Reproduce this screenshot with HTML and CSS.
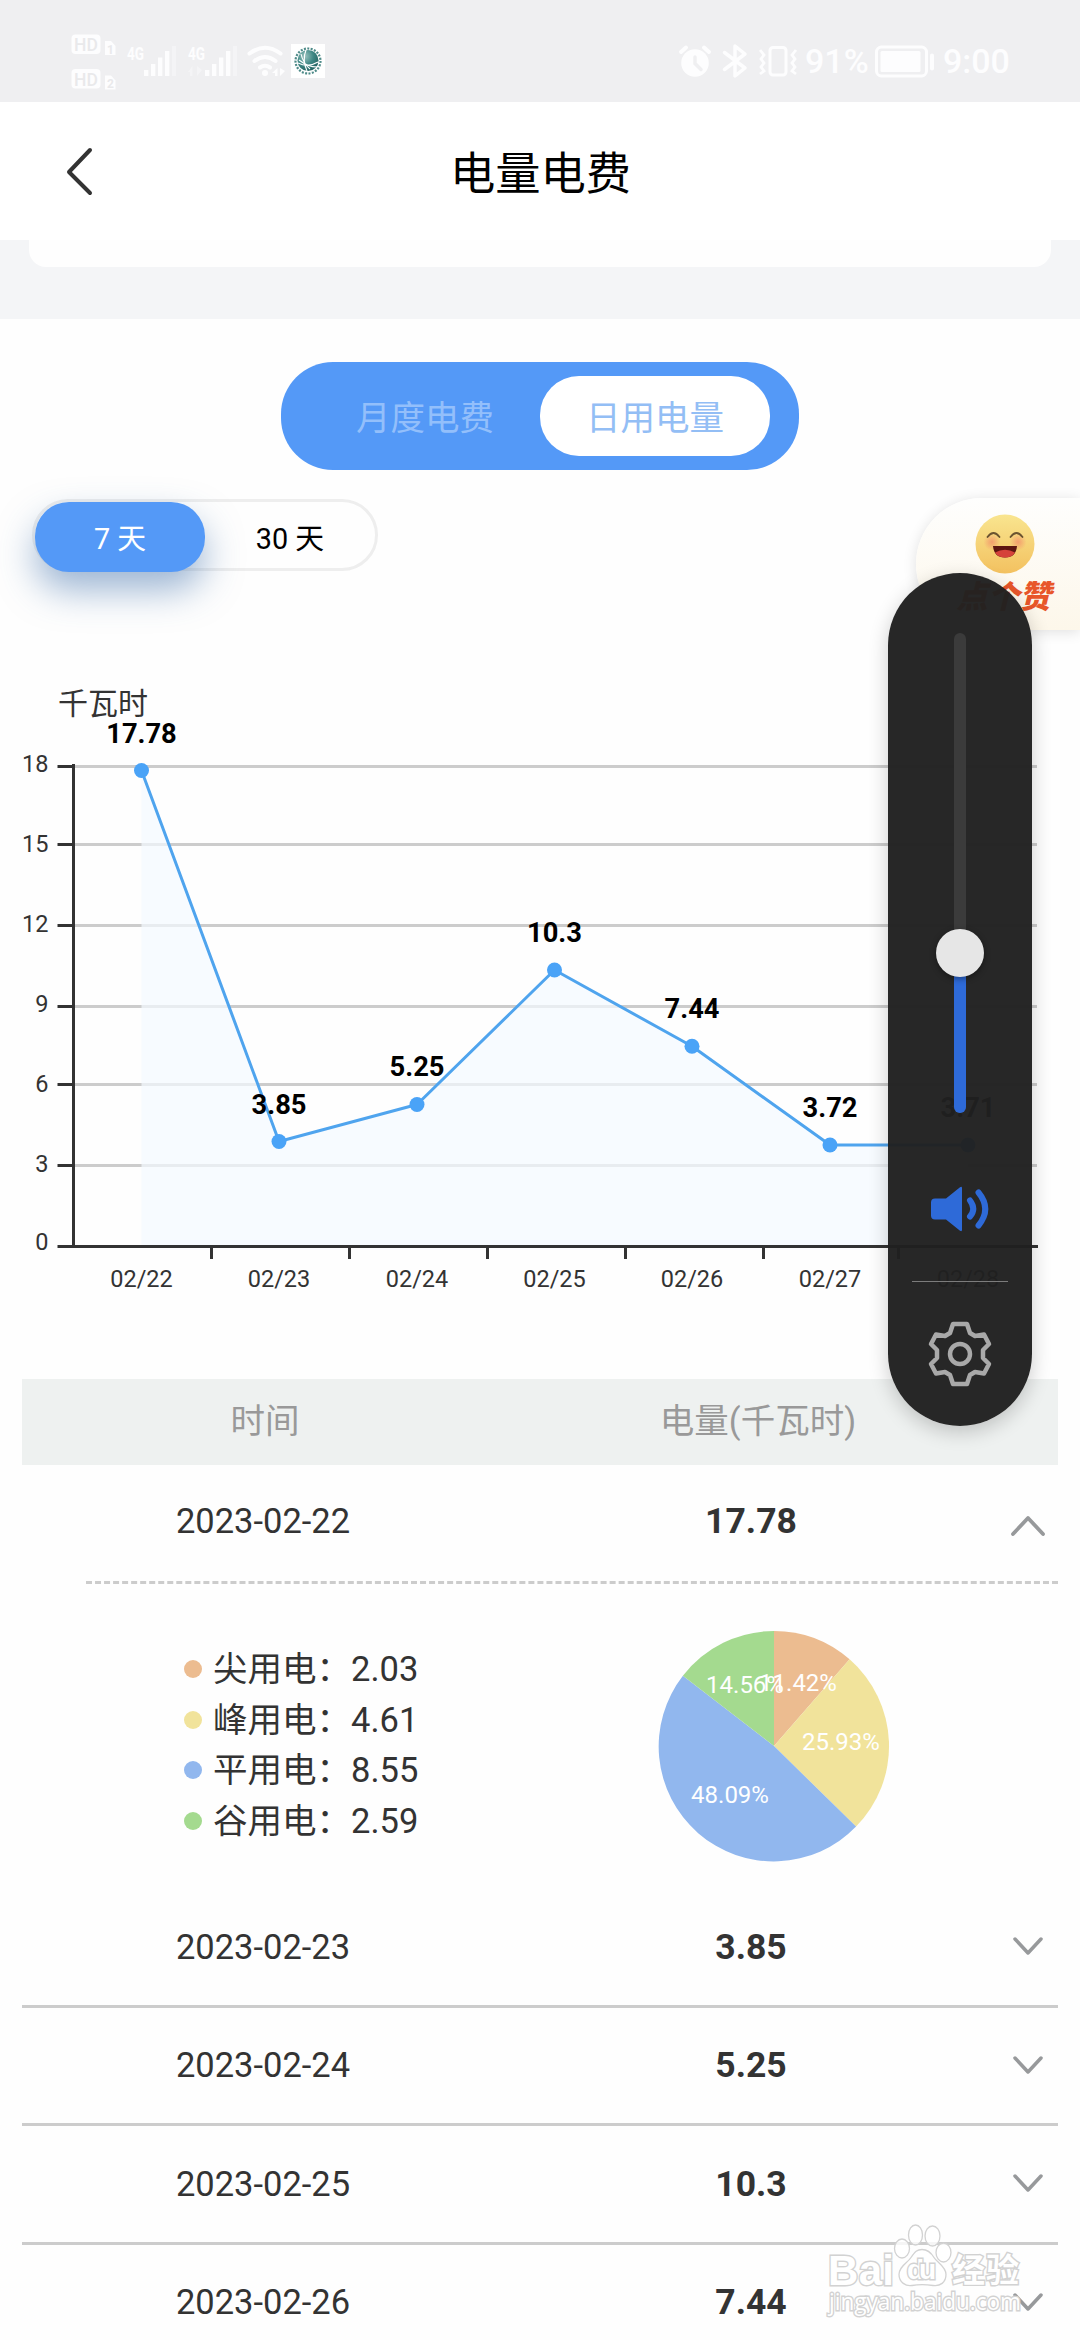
FILE: index.html
```html
<!DOCTYPE html>
<html lang="zh-CN">
<head>
<meta charset="utf-8">
<title>电量电费</title>
<link rel="stylesheet" href="styles.css">
</head>
<body>
<div class="screen">
  <header class="status">
    <svg class="status-left" width="256" height="56" viewBox="70 33 256 56" fill="#fdfdfe">
      <rect x="71.500" y="34.500" width="29" height="19.500" rx="4"/>
      <text class="st-hd" x="74" y="51">HD</text>
      <path d="M105 41h6l4.500 5v9h-10.500z"/>
      <text class="st-sim" x="107" y="53.500">1</text>
      <rect x="71.500" y="69" width="29" height="19.500" rx="4"/>
      <text class="st-hd" x="74" y="85.500">HD</text>
      <path d="M105 75.500h6l4.500 5v9h-10.500z"/>
      <text class="st-sim" x="107" y="88">2</text>
      <text class="st-net" x="127" y="60" textLength="17" lengthAdjust="spacingAndGlyphs">4G</text>
      <path d="M144 70h4.300v6H144zM151 64h4.300v12H151zM158 57.500h4.300V76H158zM165 51h4.300v25H165z"/>
      <rect x="172" y="46" width="4" height="30" opacity=".4"/>
      <text class="st-net" x="188" y="60" textLength="17" lengthAdjust="spacingAndGlyphs">4G</text>
      <path d="M192.500 66v10h-2.500v-4h-2zM197 66v10l5-6z" opacity=".4"/>
      <path d="M205 70h4.300v6H205zM212 64h4.300v12H212zM219 57.500h4.300V76H219zM226 51h4.300v25H226z"/>
      <rect x="233" y="46" width="4" height="30" opacity=".4"/>
      <g fill="none" stroke="#fdfdfe" stroke-width="4" stroke-linecap="round">
        <path d="M249.500 53.500q15.500-11.500 31 0M254.500 61q10.500-8 21 0M260 67.500q5-3.500 10 0"/>
      </g>
      <circle cx="265" cy="73" r="3"/>
      <path d="M277.500 68v8H275v-3h-3zM280 68v8l5-5z"/>
      <rect x="291" y="44" width="34" height="34" fill="#fff"/>
      <circle cx="308" cy="61" r="12.500" fill="none" stroke="#4d8a88" stroke-width="2.200" stroke-dasharray="2 1.400"/>
      <circle cx="308" cy="60.500" r="10.500" fill="url(#globe)"/>
      <path d="M306 50q-4 10 1 21M301 54q2 9 9 15M298 63q10 5 20-1M299 60q9 7 18 7" fill="none" stroke="#fff" stroke-width="1.100"/>
      <defs>
        <radialGradient id="globe" cx=".35" cy=".3" r=".8">
          <stop offset="0" stop-color="#9cc4c0"/>
          <stop offset=".5" stop-color="#3f8885"/>
          <stop offset="1" stop-color="#1f5c5b"/>
        </radialGradient>
      </defs>
    </svg>
    <div class="status-right">
      <svg width="34" height="34" viewBox="0 0 34 34"><circle cx="17" cy="19" r="13.800" fill="#fdfdfe"/><path d="M3 8l5-4.500M31 8l-5-4.500" stroke="#fdfdfe" stroke-width="4" stroke-linecap="round"/><path d="M17 13v6.500l6 6" fill="none" stroke="#efeff1" stroke-width="3.500" stroke-linecap="round"/></svg>
      <svg class="bt" width="26" height="34" viewBox="0 0 26 34"><path d="M2.500 8.500L23 24l-10 8V2l10 8L2.500 25.500" fill="none" stroke="#fdfdfe" stroke-width="3.500" stroke-linejoin="round" stroke-linecap="round"/></svg>
      <svg class="vib" width="40" height="34" viewBox="0 0 40 34" fill="none" stroke="#fdfdfe"><rect x="12" y="3.500" width="16" height="27.500" rx="3" stroke-width="3"/><path d="M2 6l4 5-3 4 3 4-3 4 3 4-4 3M38 6l-4 5 3 4-3 4 3 4-3 4 4 3" stroke-width="2.800"/></svg>
      <span class="pct">91%</span>
      <svg class="bat" width="62" height="34" viewBox="0 0 62 34"><rect x="1.500" y="3" width="50" height="29" rx="5" fill="none" stroke="#fdfdfe" stroke-width="3"/><rect x="5.500" y="7" width="40" height="21" rx="1.500" fill="#fdfdfe"/><rect x="55" y="9.500" width="4" height="17" rx="2" fill="#fdfdfe"/></svg>
      <span class="clock">9:00</span>
    </div>
  </header>

  <nav class="titlebar">
    <svg class="back" width="30" height="52" viewBox="0 0 30 52"><path d="M25 5L4 27l21 21" fill="none" stroke="#333" stroke-width="4" stroke-linecap="round" stroke-linejoin="round"/></svg>
    <h1 class="title">电量电费</h1>
  </nav>

  <div class="band"><div class="band-card"></div></div>

  <main class="content">
    <div class="mode">
      <span class="mode-item">月度电费</span>
      <span class="mode-item mode-active">日用电量</span>
    </div>

    <div class="range">
      <span class="range-item range-active">7 天</span>
      <span class="range-item">30 天</span>
    </div>

    <svg class="chart" width="1080" height="640" viewBox="0 680 1080 640">
      <text class="unit" x="103" y="713.500">千瓦时</text>
      <path d="M73 766.500H1037M73 844.500H1037M73 925.500H1037M73 1006.500H1037M73 1084.500H1037M73 1165.500H1037" stroke="#ccc" stroke-width="3"/>
      <path d="M57.500 766.500H73M57.500 844.500H73M57.500 925.500H73M57.500 1006.500H73M57.500 1084.500H73M57.500 1165.500H73M57.500 1246.500H1038M73.500 764V1247M211.500 1246v13M349.500 1246v13M487.500 1246v13M625.500 1246v13M763.500 1246v13M898.500 1246v13" stroke="#333" stroke-width="3" fill="none"/>
      <path d="M141.500 770.500L279 1141.500L417 1104.500L554.500 970L692 1046.300L830 1145H968V1245H141.500z" fill="#f4faff" fill-opacity=".7"/>
      <path d="M141.500 770.500L279 1141.500L417 1104.500L554.500 970L692 1046.300L830 1145H968" fill="none" stroke="#4fa4ee" stroke-width="3" stroke-linejoin="round"/>
      <g fill="#4aa3f7">
        <circle cx="141.500" cy="770.500" r="7.500"/><circle cx="279" cy="1141.500" r="7.500"/><circle cx="417" cy="1104.500" r="7.500"/><circle cx="554.500" cy="970" r="7.500"/><circle cx="692" cy="1046.300" r="7.500"/><circle cx="830" cy="1145" r="7.500"/><circle cx="968" cy="1145" r="7.500"/>
      </g>
      <g class="ylab">
        <text x="48.500" y="772">18</text><text x="48.500" y="852">15</text><text x="48.500" y="932">12</text><text x="48.500" y="1011.500">9</text><text x="48.500" y="1091.500">6</text><text x="48.500" y="1171.500">3</text><text x="48.500" y="1250">0</text>
      </g>
      <g class="xlab">
        <text x="141.500" y="1287">02/22</text><text x="279" y="1287">02/23</text><text x="417" y="1287">02/24</text><text x="554.500" y="1287">02/25</text><text x="692" y="1287">02/26</text><text x="830" y="1287">02/27</text><text x="968" y="1287">02/28</text>
      </g>
      <g class="val">
        <text x="141.500" y="743">17.78</text><text x="279" y="1114">3.85</text><text x="417" y="1076">5.25</text><text x="554.500" y="942">10.3</text><text x="692" y="1018">7.44</text><text x="830" y="1117">3.72</text><text x="968" y="1117">3.71</text>
      </g>
    </svg>

    <section class="table">
      <div class="row head"><span class="c1">时间</span><span class="c2">电量(千瓦时)</span></div>
      <div class="row first">
        <span class="c1">2023-02-22</span><span class="c2">17.78</span>
        <svg class="chev" width="40" height="30" viewBox="0 0 40 30"><path d="M5 24L20 8l15 16" fill="none" stroke="#97999b" stroke-width="3.800" stroke-linecap="round" stroke-linejoin="round"/></svg>
      </div>
      <div class="detail">
        <ul class="legend">
          <li><i class="dot peak"></i>尖用电：2.03</li>
          <li><i class="dot high"></i>峰用电：4.61</li>
          <li><i class="dot flat"></i>平用电：8.55</li>
          <li><i class="dot low"></i>谷用电：2.59</li>
        </ul>
        <svg class="pie" width="232" height="232" viewBox="-116 -116 232 232">
          <path d="M0 0V-115A115 115 0 0 1 75.600-86.660z" fill="#ecbc90"/>
          <path d="M0 0L75.600-86.660A115 115 0 0 1 82.100 80.600z" fill="#f1e39b"/>
          <path d="M0 0L82.100 80.600A115 115 0 0 1-91.100-70.200z" fill="#91b7ee"/>
          <path d="M0 0L-91.100-70.200A115 115 0 0 1 0-115z" fill="#a4da8f"/>
          <text x="24" y="-55">11.42%</text>
          <text x="67" y="4">25.93%</text>
          <text x="-44" y="57">48.09%</text>
          <text x="-29" y="-53">14.56%</text>
        </svg>
      </div>
      <div class="row line">
        <span class="c1">2023-02-23</span><span class="c2">3.85</span>
        <svg class="chev" width="40" height="30" viewBox="0 0 40 30"><path d="M7 7l13 14L33 7" fill="none" stroke="#97999b" stroke-width="3.500" stroke-linecap="round" stroke-linejoin="round"/></svg>
      </div>
      <div class="row line">
        <span class="c1">2023-02-24</span><span class="c2">5.25</span>
        <svg class="chev" width="40" height="30" viewBox="0 0 40 30"><path d="M7 7l13 14L33 7" fill="none" stroke="#97999b" stroke-width="3.500" stroke-linecap="round" stroke-linejoin="round"/></svg>
      </div>
      <div class="row line">
        <span class="c1">2023-02-25</span><span class="c2">10.3</span>
        <svg class="chev" width="40" height="30" viewBox="0 0 40 30"><path d="M7 7l13 14L33 7" fill="none" stroke="#97999b" stroke-width="3.500" stroke-linecap="round" stroke-linejoin="round"/></svg>
      </div>
      <div class="row line">
        <span class="c1">2023-02-26</span><span class="c2">7.44</span>
        <svg class="chev" width="40" height="30" viewBox="0 0 40 30"><path d="M7 7l13 14L33 7" fill="none" stroke="#97999b" stroke-width="3.500" stroke-linecap="round" stroke-linejoin="round"/></svg>
      </div>
    </section>
  </main>

  <aside class="like">
    <svg width="76" height="76" viewBox="-38 -38 76 76">
      <defs>
        <linearGradient id="face" x1="0" y1="0" x2="0" y2="1"><stop offset="0" stop-color="#f9e58f"/><stop offset="1" stop-color="#f3c160"/></linearGradient>
        <radialGradient id="cheek"><stop offset="0" stop-color="#f28b6a" stop-opacity=".75"/><stop offset="1" stop-color="#f28b6a" stop-opacity="0"/></radialGradient>
      </defs>
      <circle r="29.500" fill="url(#face)"/>
      <circle cx="-13" cy="-2" r="8.500" fill="url(#cheek)"/><circle cx="13" cy="-2" r="8.500" fill="url(#cheek)"/>
      <path d="M-17.500-7q6-8 12 0M5.500-7q6-8 12 0" fill="none" stroke="#6b5430" stroke-width="1.800" stroke-linecap="round"/>
      <path d="M-12 2H12Q11 13.500 0 13.500T-12 2z" fill="#5d1511"/>
      <path d="M-10 8.500Q0 3 10 8.500Q7 13.500 0 13.500T-10 8.500z" fill="#d5423a"/>
    </svg>
    <span class="like-text">点个赞</span>
  </aside>

  <aside class="volume">
    <div class="track"><div class="fill"><div class="thumb"></div></div></div>
    <svg class="speaker" width="60" height="50" viewBox="0 0 60 50"><path d="M5 14.500h11L30 3.300q2-1.300 2 1v41.400q0 2.300-2 1L16 35.500H5q-4 0-4-4v-13q0-4 4-4z" fill="#2e6ad8"/><path d="M40 16.500q6.500 8.500 0 16M48.500 8.500q13.500 16.500 0 33" fill="none" stroke="#2e6ad8" stroke-width="6" stroke-linecap="round"/></svg>
    <div class="rule"></div>
    <svg class="gear" width="70" height="70" viewBox="-35 -35 70 70" fill="none" stroke="#a9a9a9" stroke-width="4.500" stroke-linejoin="round"><circle r="10"/><path d="M-7-30H7L10-21L15-18L24-19.500L29-10L23-4V4L29 10L24 19.500L15 18L10 21L7 30H-7L-10 21L-15 18L-24 19.500L-29 10L-23 4V-4L-29-10L-24-19.500L-15-18L-10-21z"/></svg>
  </aside>

  <svg class="mark" width="204" height="100" viewBox="824 2220 204 100">
    <g fill="#fff" fill-opacity=".8" stroke="#d2d2d2" stroke-width="1.300">
      <ellipse cx="902" cy="2248.500" rx="7.500" ry="9.500"/><ellipse cx="915.500" cy="2235" rx="7" ry="10"/><ellipse cx="932.500" cy="2236" rx="7.500" ry="10"/><ellipse cx="943.500" cy="2252.500" rx="7.500" ry="9.500"/>
      <path d="M922 2249.500c6 0 9 3 12 8s12 9 12 17-6 12-13 11-15-1-21 0-13-3-13-11 8-11 12-17 6-8 11-8z"/>
      <text class="mk-b" x="828" y="2285" textLength="66">Bai</text>
      <text class="mk-du" x="907" y="2279" textLength="29">du</text>
      <text class="mk-cn" x="952" y="2282" textLength="67">经验</text>
      <text class="mk-url" x="829" y="2310" textLength="192" lengthAdjust="spacingAndGlyphs">jingyan.baidu.com</text>
    </g>
  </svg>
</div>
</body>
</html>
```
FILE: styles.css
```css
* { box-sizing: border-box; }
body {
  margin: 0;
  font-family: Roboto, "Noto Sans CJK SC", sans-serif;
  color: #333;
  background: #fefefe;
}
svg { display: block; overflow: visible; flex: none; }
.screen {
  position: relative;
  width: 1080px;
  height: 2340px;
  overflow: hidden;
}

/* status bar */
.status {
  height: 102px;
  background: #efeff1;
  display: flex;
  justify-content: space-between;
  align-items: flex-start;
  padding: 33px 71px 0 70px;
}
.st-hd { font: 500 17.500px Roboto, sans-serif; fill: #e9e9eb; }
.st-sim { font: 700 12px Roboto, sans-serif; fill: #e9e9eb; }
.st-net { font: 700 19px Roboto, sans-serif; }
.status-right {
  display: flex;
  align-items: center;
  height: 34px;
  margin-top: 11px;
  color: #fdfdfe;
  font-size: 34px;
  line-height: 34px;
  font-weight: 500;
}
.bt { margin-left: 10px; }
.vib { margin-left: 10px; }
.pct { width: 64px; margin-left: 7px; }
.bat { margin-left: 6px; }
.clock { width: 66px; margin-left: 6px; }

/* title bar */
.titlebar {
  height: 138px;
  background: #fff;
  display: flex;
  align-items: center;
  padding-left: 65px;
}
.title {
  flex: 1;
  margin: 0 94px 0 0;
  padding-top: 7px;
  text-align: center;
  font-size: 45.300px;
  line-height: 60px;
  font-weight: 400;
  color: #000;
}
.band { height: 79px; background: #f4f5f7; padding: 0 29px; }
.band-card { height: 27px; background: #fefefe; border-radius: 0 0 17px 17px; }

/* switches */
.content { padding-top: 43px; }
.mode {
  width: 518px;
  height: 108px;
  margin-left: 281px;
  padding: 14px 29px;
  display: flex;
  border-radius: 52px;
  background: #5499f7;
}
.mode-item {
  width: 230px;
  height: 80px;
  line-height: 84px;
  text-align: center;
  font-size: 34.500px;
  color: #93bffb;
}
.mode-active { border-radius: 39px; background: #fff; color: #93bef5; }
.range {
  width: 346px;
  height: 72px;
  margin: 29px 0 0 32px;
  display: flex;
  border: 3px solid #eee;
  border-radius: 36px;
}
.range-item {
  width: 170px;
  height: 70px;
  line-height: 74px;
  text-align: center;
  font-size: 28.800px;
  color: #000;
}
.range-active {
  border-radius: 34px;
  background: #5499f7;
  color: #fff;
  box-shadow: 0 18px 36px rgba(60, 110, 170, .5);
}

/* line chart */
.chart { margin-top: 109px; }
.unit { font-size: 30px; text-anchor: middle; fill: #333; }
.ylab { font-size: 23.500px; text-anchor: end; fill: #333; }
.xlab { font-size: 23.500px; text-anchor: middle; fill: #333; }
.val { font-size: 27.300px; font-weight: 700; text-anchor: middle; fill: #000; }

/* table */
.table { margin: 59px 22px 0; }
.row {
  height: 118.500px;
  display: flex;
  align-items: center;
  font-size: 34.500px;
  line-height: 50px;
}
.c1 { width: 482px; text-align: center; }
.c2 { width: 494px; text-align: center; font-weight: 700; font-size: 35.500px; }
.chev { margin-left: 10px; }
.head { height: 86px; padding-bottom: 2px; background: #eef1f0; color: #999; }
.head .c1 { width: 486px; }
.head .c2 { width: 500px; font-weight: 400; font-size: 34.500px; }
.first { height: 116px; padding-bottom: 4px; }
.first .chev { margin-top: 8px; margin-left: 10px; }
.line { border-bottom: 3px solid #ccc; }
.line .chev { margin-top: 1px; }
.detail {
  height: 308px;
  margin-left: 64px;
  display: flex;
  border-top: 3px dashed #ccc;
}
.legend { list-style: none; width: 572px; margin: 0; padding: 60px 0 0 98px; }
.legend li {
  height: 50.500px;
  line-height: 50.500px;
  font-size: 34.500px;
  display: flex;
  align-items: center;
}
.dot { width: 18px; height: 18px; border-radius: 50%; margin-right: 11px; }
.peak { background: #ecbc90; }
.high { background: #f1e39b; }
.flat { background: #91b7ee; }
.low { background: #a4da8f; }
.pie { margin-top: 46px; }
.pie text { font-size: 24px; fill: #fff; text-anchor: middle; }

/* floating feedback badge */
.like {
  position: absolute;
  left: 916px;
  top: 498px;
  width: 164px;
  height: 132px;
  display: flex;
  flex-direction: column;
  align-items: center;
  padding: 8px 0 0 13px;
  border-radius: 66px 0 0 66px;
  background: linear-gradient(#fefefd, #fdf7ea);
  box-shadow: 0 2px 14px rgba(0, 0, 0, .12);
}
.like-text {
  margin: -1px 2px 0 0;
  line-height: 34px;
  font-size: 31.500px;
  font-weight: 900;
  font-style: italic;
  color: #e8562a;
}

/* volume overlay */
.volume {
  position: absolute;
  left: 888px;
  top: 573px;
  width: 144px;
  height: 853px;
  padding-top: 60px;
  display: flex;
  flex-direction: column;
  align-items: center;
  border-radius: 72px;
  background: rgba(32, 32, 32, .97);
  box-shadow: 0 6px 20px rgba(0, 0, 0, .2);
}
.track {
  width: 12px;
  height: 480px;
  display: flex;
  align-items: flex-end;
  border-radius: 6px;
  background: #3b3b3b;
}
.fill { width: 12px; height: 160px; border-radius: 6px; background: #2e6ad8; }
.thumb {
  width: 48px;
  height: 48px;
  margin: -24px 0 0 -18px;
  border-radius: 50%;
  background: #e6e6e6;
  box-shadow: 0 2px 6px rgba(0, 0, 0, .4);
}
.speaker { margin-top: 71px; }
.rule { width: 96px; height: 1px; margin-top: 47px; background: #7c7c7c; }
.gear { margin-top: 37px; }

/* watermark */
.mark { position: absolute; left: 824px; top: 2220px; }
.mark text { paint-order: stroke; stroke-width: 2.800px; fill-opacity: 1; }
.mk-b { font: 700 42px "Liberation Sans", sans-serif; }
.mk-du { font: 700 28px "Liberation Sans", sans-serif; }
.mk-cn { font: 700 33px "Noto Sans CJK SC", sans-serif; }
.mk-url { font: 400 23px "Open Sans", sans-serif; }
```
